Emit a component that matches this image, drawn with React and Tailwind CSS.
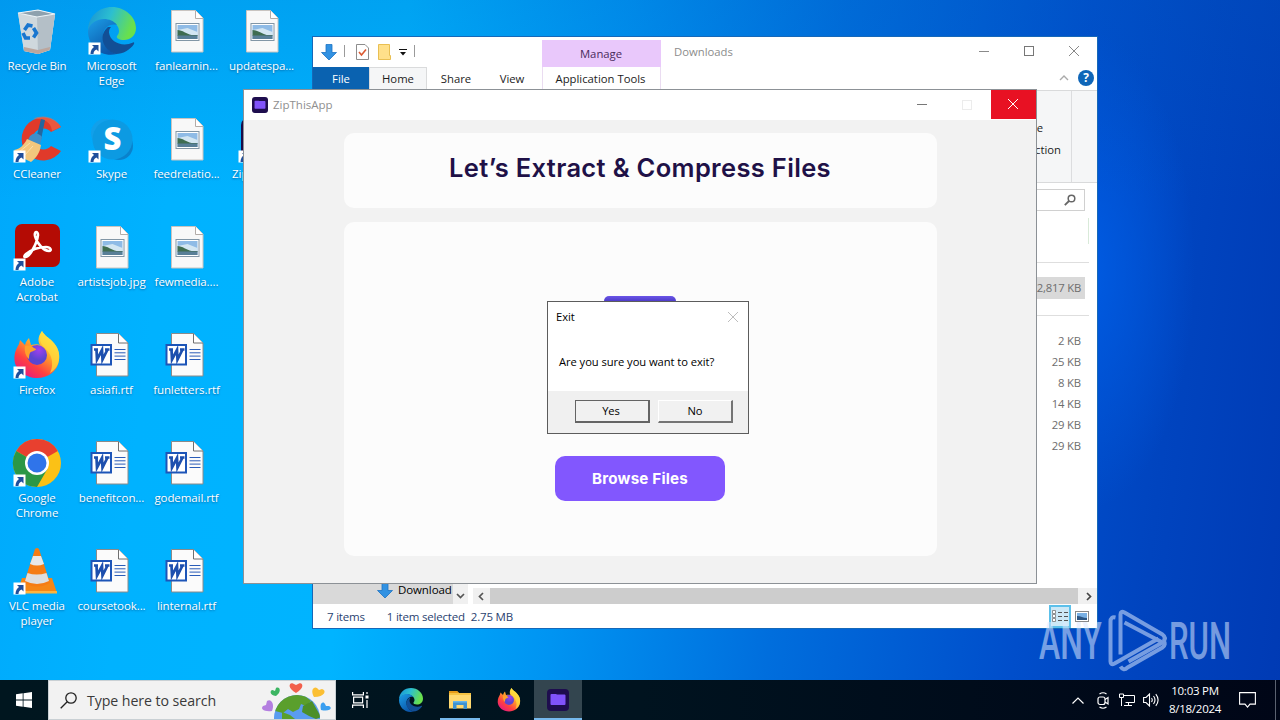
import React from "react";

const UI = "font-['Open_Sans','Noto_Sans',sans-serif]";

function Shortcut() {
  return (
    <g>
      <rect x="0.5" y="34.5" width="12" height="12" fill="#fff" />
      <path d="M4 37h6.500v6.500l-2-2c-2 1-3 2-3 4.500H2.500c0-3.500 1.500-5.500 3.500-7z" fill="#1f4f9c" />
    </g>
  );
}

function ImageFile() {
  return (
    <>
      <path d="M8.500 2.500h24l7.500 7.500v34h-31.500z" fill="#f8f8f8" stroke="#c9c4c0" />
      <path d="M32.500 2.500v8h7.500" fill="#fff" stroke="#b3aca8" />
      <rect x="13" y="15.500" width="23" height="17" fill="#fff" stroke="#8296a6" />
      <rect x="14.500" y="17" width="20" height="14" fill="#8fbbe6" />
      <path d="M14.500 22l10-2 10 4v3h-20z" fill="#d3e6f2" />
      <path d="M14.500 22c5 0 9 4 14 5h6v1h-20z" fill="#3f6d51" />
      <rect x="14.500" y="27.500" width="20" height="3.500" fill="#587f97" />
    </>
  );
}

function WordFile() {
  return (
    <>
      <path d="M8.500 1.500h22l9.500 9.500v33h-31.500z" fill="#fbfbfb" stroke="#8a8a8a" />
      <path d="M30.500 1.500v9.500h9.500" fill="#fff" stroke="#6f6f6f" />
      <path d="M26.500 17.500h11M26.500 20.800h11M26.500 24.100h11M26.500 27.500h11" stroke="#2a5cb8" />
      <rect x="2.500" y="12" width="21.500" height="21.500" fill="#1d55b8" />
      <rect x="4.500" y="14" width="17.500" height="17.500" fill="#fff" />
      <path d="M6 17.500h4M17 17.500h4.500M8.500 18l.5 9.500 5-9.500.5 9.500 4.800-9.500" fill="none" stroke="#1d4fae" strokeWidth="2.700" />
    </>
  );
}

function EdgeArt({ id }) {
  return (
    <>
      <defs>
        <linearGradient id={id + "a"} x1="0" y1="0" x2="1" y2="0.300">
          <stop offset="0" stopColor="#168fd6" />
          <stop offset="0.500" stopColor="#2cbfd0" />
          <stop offset="1" stopColor="#69e04c" />
        </linearGradient>
        <linearGradient id={id + "b"} x1="0" y1="0" x2="0.600" y2="1">
          <stop offset="0" stopColor="#1c9fe8" />
          <stop offset="1" stopColor="#0b55a8" />
        </linearGradient>
      </defs>
      <path d="M0 24C0 9 11 0 24 0s24 10 24 21c0 8-6 12-12 12-5 0-8-2-7-4 1-1 2-3 2-5 0-6-6-11-14-11C8 13 1 18 0 24z" fill={"url(#" + id + "a)"} />
      <path d="M0 24C1 17 8 12 16 12c5 0 10 2 13 6-7-2-14 3-14 11 0 9 6 16 14 18C13 51 0 39 0 24z" fill={"url(#" + id + "b)"} />
      <path d="M20 20c-9 7-7 22 8 27 7 0 14-4 18-10 .5-1 0-2-1-1.500-10 5-23 0-24-10 0-2 .5-4 2-5.500z" fill="#124f96" />
    </>
  );
}

function FirefoxArt({ id }) {
  return (
    <>
      <defs>
        <linearGradient id={id + "f"} x1="0.850" y1="0.050" x2="0.200" y2="1">
          <stop offset="0.050" stopColor="#fff44f" />
          <stop offset="0.400" stopColor="#ffa02a" />
          <stop offset="0.700" stopColor="#ff4040" />
          <stop offset="1" stopColor="#e31587" />
        </linearGradient>
        <radialGradient id={id + "p"} cx="0.600" cy="0.250">
          <stop offset="0" stopColor="#a040ee" />
          <stop offset="1" stopColor="#5b45d0" />
        </radialGradient>
      </defs>
      <path d="M29 0c2 4 7 7 10 10 6 6 8 12 7 19-1 11-11 18-22 18S2 39 1.500 29C1 21 4 17 6 13l1-4 5 5c1-4 3-6 4-7l2 7c4-1 7-1 9 0-3-5-1-10 2-14z" fill={"url(#" + id + "f)"} />
      <path d="M29 0c2 4 7 7 10 10 6 6 8 12 7 19-1 6-5 11-9 13 3-6 3-14-1-20-3-5-9-8-9-14 0-3 1-6 2-8z" fill="#ffdc3c" opacity="0.750" />
      <circle cx="24" cy="24" r="10" fill={"url(#" + id + "p)"} />
      <path d="M12 15c3-1 7 0 9 2l2 1c0 2-5 2-6 4s-1 4-1 6c-3-2-5-8-4-13z" fill="#ffa02a" />
    </>
  );
}

const art = {
  bin: (
    <>
      <path d="M5 5l20-3 17 4-5 36-12 4-14-3z" fill="#dce5eb" />
      <path d="M5 5l19 4 18-3-5 36-12 4-14-3z" fill="#cdd6dc" opacity="0.900" />
      <path d="M24 9l18-3-5 36-12 4z" fill="#b4bfc7" />
      <path d="M5 5l20-3 17 4-18 3z" fill="#8ea1ae" stroke="#edf4f8" strokeWidth="1.200" />
      <path d="M11 39l14 3 12-3-.5 3-11.500 4-14-3z" fill="#bca69d" />
      <g fill="none" stroke="#1976cf" strokeWidth="3.600">
        <path d="M11.500 22l3.500-5 4.500 1M20.500 20l3 5-3 4.500M17 30h-4.500l-2.500-5" />
      </g>
    </>
  ),
  edge: <><g transform="translate(0 -1)"><EdgeArt id="d" /></g><Shortcut /></>,
  cc: (
    <>
      <path d="M45 12A21.500 21.500 0 1 0 45 36l-10-5a10.500 10.500 0 1 1 0-14z" transform="translate(3 -1)" fill="#e03a2a" />
      <path d="M48 11C42 1 30-2 20 3c7-1 18 1 19 12z" fill="#f16a4c" opacity="0.600" />
      <path d="M28 3l4 1-4 20-5-1z" fill="#24679f" />
      <path d="M17 20c4-4 9-3 12 1l-2 8-12-5z" fill="#3f8fc9" />
      <path d="M1 34c6-1 10-5 13-11l14 6c-1 8-5 13-10 17-7-3-13-7-17-12z" fill="#f2c77d" />
      <path d="M6 36l11-9M11 40l9-10" stroke="#fae1ac" />
      <Shortcut />
    </>
  ),
  skype: (
    <>
      <circle cx="17" cy="17" r="14" fill="#12a0ea" />
      <circle cx="31" cy="30" r="14" fill="#0a82cc" />
      <circle cx="24.500" cy="23.500" r="20" fill="#0c9ae2" />
      <text x="24.500" y="34" textAnchor="middle" fontSize="31" fontWeight="800" fill="#fff" fontFamily="Open Sans, sans-serif">S</text>
      <Shortcut />
    </>
  ),
  acro: (
    <>
      <rect x="2" y="0" width="45" height="43" rx="7" fill="#b40b04" />
      <path d="M12 33c4 1 12-13 13-22 0-4-4-4-3 1 2 8 9 15 14 15 3 0 2-4-3-4-8 0-15 3-20 7-2 2-2 3-1 3z" fill="none" stroke="#fff" strokeWidth="2.600" />
      <Shortcut />
    </>
  ),
  fox: <><g transform="translate(0 -1)"><FirefoxArt id="e" /></g><Shortcut /></>,
  chrome: (
    <>
      <g transform="translate(0 -1)">
        <circle cx="24" cy="24" r="24" fill="#fbc116" />
        <path d="M24 24L3.200 12A24 24 0 0 1 44.800 12z" fill="#e8402f" />
        <path d="M3.200 12A24 24 0 0 0 24 48l10.400-18L24 24z" fill="#2b9747" />
        <circle cx="24" cy="24" r="12" fill="#fff" />
        <circle cx="24" cy="24" r="9.500" fill="#2f74ea" />
      </g>
      <Shortcut />
    </>
  ),
  vlc: (
    <>
      <path d="M9 30h30l5 15H4z" fill="#f58616" />
      <path d="M4 43h40v2.500H4z" fill="#ffb43c" />
      <path d="M22 1q2-2 4 0l11 34q-13 7-26 0z" fill="#f57c14" />
      <path d="M20 8h8l3 8q-7 3-14 0z" fill="#e8e8e8" />
      <path d="M14.500 25q9 3 19 0l2.500 8q-12 6-24 0z" fill="#dedede" />
      <Shortcut />
    </>
  ),
  zip: (
    <>
      <rect x="3" y="2" width="44" height="44" rx="7" fill="#1b0b48" />
      <Shortcut />
    </>
  ),
  img: <ImageFile />,
  word: <WordFile />,
};

const icons = [
  ["bin", ["Recycle Bin"]], ["cc", ["CCleaner"]], ["acro", ["Adobe", "Acrobat"]], ["fox", ["Firefox"]], ["chrome", ["Google", "Chrome"]], ["vlc", ["VLC media", "player"]],
  ["edge", ["Microsoft", "Edge"]], ["skype", ["Skype"]], ["img", ["artistsjob.jpg"]], ["word", ["asiafi.rtf"]], ["word", ["benefitcon..."]], ["word", ["coursetook..."]],
  ["img", ["fanlearnin..."]], ["img", ["feedrelatio..."]], ["img", ["fewmedia...."]], ["word", ["funletters.rtf"]], ["word", ["godemail.rtf"]], ["word", ["linternal.rtf"]],
  ["img", ["updatespa..."]], ["zip", ["ZipThisApp"]],
];

function Desktop() {
  return (
    <div className="absolute left-0 top-0 grid w-[299px] grid-flow-col grid-cols-[74px_75px_75px_75px] grid-rows-[repeat(6,108px)] pt-2">
      {icons.map(([k, lines], i) => (
        <div key={i} className="flex flex-col items-center">
          <svg className="overflow-visible" width="48" height="48" viewBox="0 0 48 48">{art[k]}</svg>
          <div className="mt-[2px] text-center text-[11.500px] leading-[15px] tracking-[-0.08px] whitespace-nowrap text-white [text-shadow:0_1px_2px_rgba(0,40,90,0.5)]">
            {lines.map((l) => <div key={l}>{l}</div>)}
          </div>
        </div>
      ))}
    </div>
  );
}

function DownArrow({ className }) {
  return (
    <svg className={className} width="16" height="17" viewBox="0 0 16 17">
      <path d="M5 .5h6v8h4.500L8 16 .5 8.500H5z" fill="#3292e2" stroke="#1d74c4" strokeWidth="0.800" />
    </svg>
  );
}

function Cross({ size, color }) {
  return (
    <svg width={size} height={size} viewBox="0 0 10 10">
      <path d="M0 0l10 10M10 0L0 10" stroke={color} strokeWidth="1" />
    </svg>
  );
}

function Explorer() {
  return (
    <div className="absolute left-[312px] top-[36px] flex h-[593px] w-[786px] flex-col border border-[#1668b8] bg-white text-[12px] text-[#1c1c1c]">
      <div className="flex h-[53px] shrink-0">
        <div className="flex w-[229px] flex-col">
          <div className="flex h-[30px] items-center pl-2">
            <DownArrow />
            <div className="ml-[7px] mb-[3px] h-3 w-px bg-[#9a9a9a]" />
            <svg className="ml-[11px]" width="13" height="16" viewBox="0 0 13 16">
              <path d="M.5.500h8.500l3.500 3.500v11.500H.5z" fill="#fff" stroke="#8d8d8d" />
              <path d="M3 8l2.500 3L10 5.500" fill="none" stroke="#dc5a32" strokeWidth="1.600" />
            </svg>
            <svg className="ml-[9px]" width="13" height="16" viewBox="0 0 13 16">
              <path d="M.5.500h11v11h1v4H.5z" fill="#ffe08a" stroke="#e9bf52" />
            </svg>
            <svg className="ml-[8px]" width="8" height="7" viewBox="0 0 8 7">
              <path d="M0 .5h8" stroke="#111" /><path d="M1 3h6L4 6.500z" fill="#111" />
            </svg>
            <div className="ml-[7px] mb-[3px] h-3 w-px bg-[#9a9a9a]" />
          </div>
          <div className="flex h-[23px] leading-[23px] text-center text-[11.300px]">
            <div className="w-[56px] bg-[#0a62b0] text-white">File</div>
            <div className="w-[58px] border border-b-0 border-[#dadbdc] bg-[#f5f6f7] leading-[22px]">Home</div>
            <div className="w-[58px]">Share</div>
            <div className="w-[54px]">View</div>
          </div>
        </div>
        <div className="mt-[3px] flex w-[119px] flex-col text-center text-[11.300px]">
          <div className="h-[27px] bg-[#e9c8fb] pr-px leading-[28px] text-[#4a2a5c]">Manage</div>
          <div className="h-[23px] border-x border-[#eadcf1] pr-[2px] leading-[23px]">Application Tools</div>
        </div>
        <div className="ml-[13px] leading-[29px] text-[11.300px] text-[#8c8c8c]">Downloads</div>
        <div className="ml-auto flex flex-col items-end">
          <div className="flex h-[30px] items-center gap-[35px] pr-[18px] pb-[2px]">
            <div className="h-px w-[10px] bg-[#8a8a8a]" />
            <div className="size-[10px] border border-[#777]" />
            <Cross size={10} color="#888" />
          </div>
          <div className="flex items-center gap-2 pr-[3px] pt-[3px]">
            <svg width="11" height="6" viewBox="0 0 11 6"><path d="M1 5l4-4 4 4" fill="none" stroke="#aaa" strokeWidth="1.400" /></svg>
            <div className="flex size-4 items-center justify-center rounded-full bg-[#0f66b8] text-[12px] font-bold text-white">?</div>
          </div>
        </div>
      </div>
      <div className="flex h-[93px] shrink-0 justify-end border-y border-[#d9dadb] bg-[#f5f6f7]">
        <div className="mr-[25px] w-[60px] border-r border-[#dcdddf] pr-[10px] pt-[26px] text-[11.300px] leading-[22px]">
          <div className="pr-[18px] text-right">None</div>
          <div className="text-right whitespace-nowrap">selection</div>
        </div>
      </div>
      <div className="flex h-[35px] shrink-0 justify-end pr-3 pt-[6px]">
        <div className="flex h-[22px] w-[120px] items-center justify-end border border-[#d0d0d0] pr-2">
          <svg width="12" height="12" viewBox="0 0 12 12"><circle cx="7.500" cy="4.500" r="3.300" fill="none" stroke="#666" strokeWidth="1.500" /><path d="M5 7L.8 11.200" stroke="#666" strokeWidth="1.800" /></svg>
        </div>
      </div>
      <div className="flex flex-1 flex-col items-end text-[11.300px] text-[#6d6d6d]">
        <div className="h-[44px] w-[120px] pr-2"><div className="h-[26px] w-full border-r border-[#d9ead9]" /></div>
        <div className="mr-2 h-px w-[120px] bg-[#dedede]" />
        <div className="mr-3 mt-[14px] h-[22px] w-[100px] bg-[#d9d9d9] pr-1 text-right leading-[21px] tracking-[-0.200px]">2,817 KB</div>
        <div className="mr-2 mt-[16px] h-px w-[120px] bg-[#dedede]" />
        <div className="mr-4 mt-[14px] text-right leading-[21px] tracking-[-0.150px]">
          {["2 KB", "25 KB", "8 KB", "14 KB", "29 KB", "29 KB"].map((t, i) => <div key={i}>{t}</div>)}
        </div>
      </div>
      <div className="flex h-[23px] shrink-0 items-end">
        <div className="flex h-full w-[140px] items-start bg-[#d9d9d9] pl-[64px]">
          <DownArrow className="mt-[1px] shrink-0" />
          <span className="ml-[5px] mt-px text-[11.500px] leading-4 tracking-[-0.100px] text-black">Download</span>
        </div>
        <div className="flex h-full w-[15px] items-center justify-center bg-[#f0f0f0] pt-[6px]">
          <svg width="9" height="6" viewBox="0 0 9 6"><path d="M1 1l3.500 3.500L8 1" fill="none" stroke="#555" strokeWidth="1.700" /></svg>
        </div>
        <div className="ml-[5px] flex h-[16px] flex-1 items-center bg-[#f0f0f0]">
          <svg className="mx-[5px]" width="6" height="9" viewBox="0 0 6 9"><path d="M5 1L1.500 4.500 5 8" fill="none" stroke="#555" strokeWidth="1.700" /></svg>
          <div className="ml-px h-full flex-1 bg-[#cdcdcd]" />
          <svg className="ml-[8px] mr-[5px]" width="6" height="9" viewBox="0 0 6 9"><path d="M1 1l3.500 3.500L1 8" fill="none" stroke="#444" strokeWidth="1.700" /></svg>
        </div>
      </div>
      <div className="flex h-[24px] shrink-0 items-center pl-[14px] pr-[8px] text-[11.500px] tracking-[-0.200px] text-[#2a4270]">
        <span className="pt-px">7 items</span>
        <span className="ml-[22px] pt-px">1 item selected</span>
        <span className="ml-[6px] pt-px">2.75 MB</span>
        <div className="ml-auto flex h-[23px] w-[22px] items-center justify-center border-2 border-[#5cc0ea] bg-[#cce8f6]">
          <svg width="17" height="13" viewBox="0 0 17 13">
            <path d="M.5.500h3v3h-3zM.5 4.500h3v3h-3zM.5 8.500h3v3h-3z" fill="#fff" stroke="#777" strokeWidth="0.800" />
            <path d="M6 2.500h4M12 2.500h4M6 6.500h4M12 6.500h4M6 10.500h4M12 10.500h4" stroke="#555" />
          </svg>
        </div>
        <svg className="ml-1" width="14" height="11" viewBox="0 0 14 11">
          <rect x="0.500" y="0.500" width="13" height="10" fill="#fff" stroke="#888" />
          <rect x="2" y="2" width="10" height="7" fill="#79b0e4" /><path d="M2 5c4 0 6 2 10 2v2H2z" fill="#2c5582" />
        </svg>
      </div>
    </div>
  );
}

function ZipLogo({ size }) {
  return (
    <svg width={size} height={size} viewBox="0 0 22 22">
      <rect width="22" height="22" rx="4" fill="#1e0d4e" />
      <path d="M3.500 6q0-1 1-1h4.500l1 .500h7.500q1 0 1 1v8.500q0 1-1 1h-13q-1 0-1-1z" fill="#8052fa" />
    </svg>
  );
}

function ZipWindow() {
  return (
    <div className="absolute left-[243px] top-[89px] flex h-[495px] w-[794px] flex-col border border-[#8c9196] bg-[#f2f2f2]">
      <div className="flex h-[30px] shrink-0 items-start bg-white">
        <div className="flex h-[29px] items-center pl-2">
          <ZipLogo size={16} />
          <span className="ml-[5px] text-[11.500px] text-[#8f8f8f]">ZipThisApp</span>
        </div>
        <div className="ml-auto flex h-[29px] items-center">
          <div className="h-px w-[10px] bg-[#777]" />
          <div className="ml-[35px] size-[10px] border border-[#ececec]" />
          <div className="ml-[19px] flex h-[29px] w-[45px] items-center justify-center bg-[#e81123] pr-px pb-px"><Cross size={10} color="#fff" /></div>
        </div>
      </div>
      <div className="flex flex-1 flex-col items-center gap-[14px] pt-[13px]">
        <div className="flex h-[75px] w-[593px] items-center justify-center rounded-[10px] bg-[#fcfcfc] pb-[4px] font-['Inter',sans-serif] text-[25.500px] font-semibold tracking-[0.330px] whitespace-nowrap text-[#1f1147]">
          <span>Let’s Extract &amp; Compress Files</span>
        </div>
        <div className="flex h-[334px] w-[593px] flex-col items-center rounded-[10px] bg-[#fcfcfc] pt-[74px]">
          <div className="h-[60px] w-[72px] rounded-[5px] bg-linear-to-b from-[#6a55e8] via-[#4a38c4] via-10% to-[#4a38c4]" />
          <div className="mt-[100px] flex h-[45px] w-[170px] items-center justify-center rounded-[10px] bg-[#8257fe] pt-px font-['Inter',sans-serif] text-[15.200px] font-bold tracking-[0.180px] text-white">
            Browse Files
          </div>
        </div>
      </div>
    </div>
  );
}

function Dialog() {
  return (
    <div className="absolute left-[547px] top-[301px] flex h-[133px] w-[202px] flex-col border border-[#5c5c5c] bg-white text-[11.200px] tracking-[-0.060px] text-black">
      <div className="flex h-[29px] items-center justify-between pl-2 pr-[10px]">
        <span className="pt-px">Exit</span>
        <Cross size={10} color="#bdbdbd" />
      </div>
      <div className="flex-1 pl-[11px] pt-[23px] leading-4 whitespace-nowrap">Are you sure you want to exit?</div>
      <div className="flex h-[42px] items-start gap-2 bg-[#f0f0f0] pl-[27px] pt-[9px] leading-[20px] text-center">
        <div className="h-[23px] w-[75px] border border-b-2 border-r-2 border-[#646464] bg-[#f1f1f1] pr-[2px]">Yes</div>
        <div className="h-[23px] w-[75px] border border-b-2 border-r-2 border-t-white border-l-white border-b-[#747474] border-r-[#747474] bg-[#f1f1f1]">No</div>
      </div>
    </div>
  );
}

function Watermark() {
  return (
    <svg className="absolute left-[1036px] top-[600px]" width="230" height="80" viewBox="0 -6 230 80">
      <g fill="#dbe8ff" opacity="0.540" fontFamily="Roboto, sans-serif" fontSize="51" fontWeight="500">
        <text transform="translate(3 53) scale(0.625 1)">ANY</text>
        <text transform="translate(133 53) scale(0.610 1)">RUN</text>
        <g fill="none" stroke="#dbe8ff" strokeWidth="4" strokeLinejoin="round" transform="translate(-1.500 -0.500)">
          <path d="M81 12q-5-1-5 4v40q0 4 4 2l44-25" />
          <path d="M86 49V9q0-4 4-2l38 22q4 3 1 7" />
          <path d="M90 17l38 20-34 19" />
          <path d="M86 61q3 5 7 1l35-20q4-3 1-7" />
        </g>
      </g>
    </svg>
  );
}

function Globe() {
  return (
    <svg width="72" height="40" viewBox="0 0 72 40">
      <defs><clipPath id="gl"><circle cx="37" cy="39" r="23" /></clipPath></defs>
      <circle cx="37" cy="39" r="23" fill="#5a9cf0" />
      <g clipPath="url(#gl)">
        <path d="M18 24c6-9 18-9 27-7l6 5-5 5-5-2-2 5-6 3-5-3-5 4-8-2z" fill="#5a9f2c" />
        <path d="M43 27l9-5 9 16-5 2-7-3-7-4z" fill="#4c8f28" />
        <path d="M22 33l8 3 5 4H22z" fill="#5a9f2c" />
      </g>
      <path d="M36 14c-9-5-7-11-3-9.500L36 6l3-1.500c4-1.500 6 4.500-3 9.500z" fill="#f2604c" />
      <path d="M16 17c-7-1-6-6-3.500-6l2.500 1 1-3c4-2 6 4 0 8z" fill="#3cb562" />
      <path d="M54 18c-4-7 0-11 3-9l2 2 3-1c5 1 3 8-8 8z" fill="#fbbf33" />
      <path d="M12 32c-8 1-12-2-9-5l3-1 1-4c4-3 8 3 5 10z" fill="#b47fe0" />
      <path d="M61 31c-2-8 3-9 4-6l1 2 3 0c4 2 1 6-8 4z" fill="#3a9ff0" />
    </svg>
  );
}

function Taskbar() {
  return (
    <div className="absolute bottom-0 left-0 flex h-10 w-full items-stretch bg-linear-to-r from-[#00161f] via-[#00131f] to-[#000617] text-white">
      <div className="flex w-12 items-center justify-center">
        <svg width="16" height="16" viewBox="0 0 16 16" fill="#fff"><path d="M0 2.300l6.700-1v6.200H0zM7.500 1.200L16 0v7.500H7.500zM0 8.400h6.700v6.300L0 13.700zM7.500 8.400H16V16l-8.500-1.200z" /></svg>
      </div>
      <div className="flex w-[288px] items-center border border-[#c9d0d4] bg-[#f2f2f2] pl-[11px] text-[#3a3a3a]">
        <svg width="17" height="17" viewBox="0 0 17 17" fill="none" stroke="#222" strokeWidth="1.300"><circle cx="11" cy="6" r="5.200" /><path d="M7.200 9.800L.7 16.300" /></svg>
        <span className="ml-[10px] mt-[2px] text-[14.200px] tracking-[-0.080px]">Type here to search</span>
        <div className="ml-auto mr-[3px] flex h-full items-end"><Globe /></div>
      </div>
      <div className="flex w-12 items-center justify-center">
        <svg width="17" height="16" viewBox="0 0 17 16" fill="none" stroke="#fff" strokeWidth="1.200"><path d="M.6 0v2.800h10.800V0M.6 16v-2.800h10.800V16M1.600 5.200h9v5.600h-9z" /><path d="M15 0v2M15 8v8" /><path d="M13.500 3.500h3v3h-3z" fill="#fff" stroke="none" /></svg>
      </div>
      <div className="ml-[3px] flex w-12 items-center justify-center"><svg width="24" height="24" viewBox="0 0 48 48"><EdgeArt id="t" /></svg></div>
      <div className="ml-[5px] flex w-[40px] flex-col items-center border-b-2 border-[#76b9ed]">
        <svg className="mt-[11px]" width="22" height="18" viewBox="0 0 22 18">
          <path d="M0 0h8l2 2h12v15H0z" fill="#f5c343" /><path d="M0 4h22v13.500H0z" fill="#ffd970" /><path d="M0 0h8l2 2H0z" fill="#e69b18" />
          <path d="M4 10h14v8h-3.500v-4h-7v4H4z" fill="#3d93d2" /><path d="M4 10h14v1.500H4z" fill="#65b5ea" />
        </svg>
      </div>
      <div className="ml-[5px] flex w-12 items-center justify-center"><svg width="24" height="24" viewBox="0 0 48 48"><FirefoxArt id="u" /></svg></div>
      <div className="ml-[1px] flex w-12 items-center justify-center border-b-2 border-[#76b9ed] bg-[#33454f] pt-[2px]"><ZipLogo size={22} /></div>
      <div className="ml-auto flex items-center">
        <svg width="12" height="7" viewBox="0 0 12 7"><path d="M.5 6.500L6 1l5.500 5.500" fill="none" stroke="#fff" strokeWidth="1.200" /></svg>
        <svg className="ml-[13px]" width="12" height="17" viewBox="0 0 12 17" fill="none" stroke="#fff" strokeWidth="1.200"><rect x="1" y="5" width="7" height="7.500" rx="2" /><path d="M8 7.500L11 5.500v6.500L8 10M2.500 2q3.500-2.500 7 0M2.500 15q3.500 2.500 7 0" /></svg>
        <svg className="ml-[10px]" width="16" height="14" viewBox="0 0 16 14" fill="none" stroke="#fff"><path d="M4.500 2.500h11v7h-9M5 12.500h8M9.500 9.500v3M.5 1h4v3.500h-4zM2.500 4.500V13" /></svg>
        <svg className="ml-[8px]" width="17" height="14" viewBox="0 0 17 14" fill="none" stroke="#fff" strokeWidth="1.100"><path d="M.6 4.500H3L6.500 1v12L3 9.500H.6zM8.500 5q1.500 2 0 4M10.500 3q3 4 0 8M12.800 1.200q4.600 5.800 0 11.600" /></svg>
        <div className="ml-[8px] w-[54px] text-center text-[11.500px] leading-[18px] whitespace-nowrap tracking-[-0.250px]">
          <div>10:03 PM</div><div>8/18/2024</div>
        </div>
        <svg className="ml-[17px]" width="17" height="16" viewBox="0 0 17 16"><path d="M.6.600h15.800v11.500H11l-2.500 3-2.500-3H.6z" fill="none" stroke="#fff" strokeWidth="1.100" /></svg>
        <div className="ml-[19px] mr-1 h-10 w-px bg-[#5b6270]" />
      </div>
    </div>
  );
}

export default function App() {
  return (
    <div className={"relative h-[720px] w-[1280px] overflow-hidden bg-[radial-gradient(ellipse_110px_240px_at_1085px_270px,#005be2_0%,transparent_100%),linear-gradient(97deg,#00a8fb_0%,#00b2ff_14%,#00b4ff_30%,#0094f2_46%,#006edd_62%,#004ecb_80%,#0044bf_89%,#003ab4_100%)] " + UI}>
      <div className="absolute inset-x-0 top-0 h-[200px] bg-linear-to-b from-[#005cbc]/20 to-transparent" />
      <Desktop />
      <Explorer />
      <ZipWindow />
      <Dialog />
      <Watermark />
      <Taskbar />
    </div>
  );
}
